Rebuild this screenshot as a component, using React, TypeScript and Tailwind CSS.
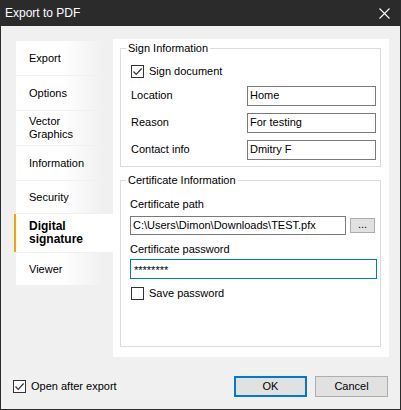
import React from "react";

function CheckBox({ checked }: { checked?: boolean }) {
  return (
    <span className="flex h-[13px] w-[13px] shrink-0 items-center justify-center border border-[#333333] bg-white">
      {checked ? (
        <svg width="11" height="11" viewBox="0 0 11 11">
          <path d="M1.5 5.5 L4.2 8.3 L9.6 2.5" fill="none" stroke="#333333" strokeWidth="1.2" />
        </svg>
      ) : null}
    </span>
  );
}

function Field({ label, value }: { label: string; value: string }) {
  return (
    <div className="flex h-[20px] items-center">
      <span className="w-[126px] pl-[10px]">{label}</span>
      <div className="flex h-[20px] w-[129px] items-center border border-[#7a7a7a] bg-white pl-[2px]">
        {value}
      </div>
    </div>
  );
}

const tabs = [
  { label: "Export", h: "h-[34px]" },
  { label: "Options", h: "h-[34px]" },
  { label: "Vector Graphics", h: "h-[34px]", two: ["Vector", "Graphics"] },
  { label: "Information", h: "h-[34px]" },
  { label: "Security", h: "h-[32px]" },
  { label: "Digital signature", h: "h-[38px]", two: ["Digital", "signature"], active: true },
  { label: "Viewer", h: "h-[32px]" },
];

export default function App() {
  return (
    <div className="flex h-[410px] w-[401px] flex-col border-x border-b border-[#2b2b2b] bg-[#f0f0f0] font-['Liberation_Sans',Arial,sans-serif] text-[11px] text-black">
      <div className="flex h-[26px] shrink-0 items-center justify-between bg-[#2b2b2b] pl-[4px] pr-[10px] text-[12px] text-white">
        <span>Export to PDF</span>
        <svg width="11" height="11" viewBox="0 0 11 11">
          <path d="M0.5 0.5 L10.5 10.5 M10.5 0.5 L0.5 10.5" stroke="#ffffff" strokeWidth="1.1" />
        </svg>
      </div>

      <div className="flex pl-[13px] pt-[13px]">
        <div className="flex w-[99px] flex-col gap-[1px] pt-[2px]">
          {tabs.map((t) =>
            t.active ? (
              <div
                key={t.label}
                className={`flex ${t.h} flex-col justify-center border-l-2 border-[#f5a300] bg-white pl-[13px] text-[12px] font-bold leading-[13px]`}
              >
                {t.two ? t.two.map((l) => <span key={l}>{l}</span>) : t.label}
              </div>
            ) : (
              <div
                key={t.label}
                className={`ml-[2px] mr-[7px] flex ${t.h} flex-col justify-center bg-gradient-to-r from-white via-white to-[#efefef] pl-[13px] leading-[13px]`}
              >
                {t.two ? t.two.map((l) => <span key={l}>{l}</span>) : t.label}
              </div>
            )
          )}
        </div>

        <div className="h-[318px] w-[276px] bg-white px-[7px] pt-[3px]">
          <fieldset className="h-[125px] w-[261px] border border-[#dcdcdc]">
            <legend className="ml-[5px] px-[2px] leading-[13px]">Sign Information</legend>
            <div className="flex flex-col">
              <div className="mt-[8px] flex items-center gap-[5px] pl-[10px]">
                <CheckBox checked />
                <span>Sign document</span>
              </div>
              <div className="mt-[6px] flex flex-col gap-[7px]">
                <Field label="Location" value="Home" />
                <Field label="Reason" value="For testing" />
                <Field label="Contact info" value="Dmitry F" />
              </div>
            </div>
          </fieldset>

          <fieldset className="mt-[7px] h-[173px] w-[261px] border border-[#dcdcdc]">
            <legend className="ml-[5px] px-[2px] leading-[13px]">Certificate Information</legend>
            <div className="flex flex-col pl-[9px]">
              <span className="mt-[11px] leading-[13px]">Certificate path</span>
              <div className="mt-[5px] flex items-center gap-[4px]">
                <div className="flex h-[19px] w-[216px] items-center border border-[#7a7a7a] bg-white pl-[2px]">
                  C:\Users\Dimon\Downloads\TEST.pfx
                </div>
                <div className="flex h-[15px] w-[25px] items-center justify-center border border-[#adadad] bg-[#e1e1e1] pb-[3px] leading-none">
                  ...
                </div>
              </div>
              <span className="mt-[8px] leading-[13px]">Certificate password</span>
              <div className="mt-[3px] flex h-[20px] w-[247px] items-center border border-[#0078d7] bg-white pl-[3px] pt-[3px]">
                ********
              </div>
              <div className="mt-[6px] flex items-center gap-[5px] pl-[1px]">
                <CheckBox />
                <span>Save password</span>
              </div>
            </div>
          </fieldset>
        </div>
      </div>

      <div className="mt-[19px] flex items-center justify-between pl-[12px] pr-[12px]">
        <div className="flex items-center gap-[5px]">
          <CheckBox checked />
          <span>Open after export</span>
        </div>
        <div className="flex gap-[8px]">
          <div className="flex h-[21px] w-[73px] items-center justify-center border-2 border-[#0078d7] bg-[#e1e1e1]">
            OK
          </div>
          <div className="flex h-[21px] w-[73px] items-center justify-center border border-[#adadad] bg-[#e1e1e1]">
            Cancel
          </div>
        </div>
      </div>
    </div>
  );
}
